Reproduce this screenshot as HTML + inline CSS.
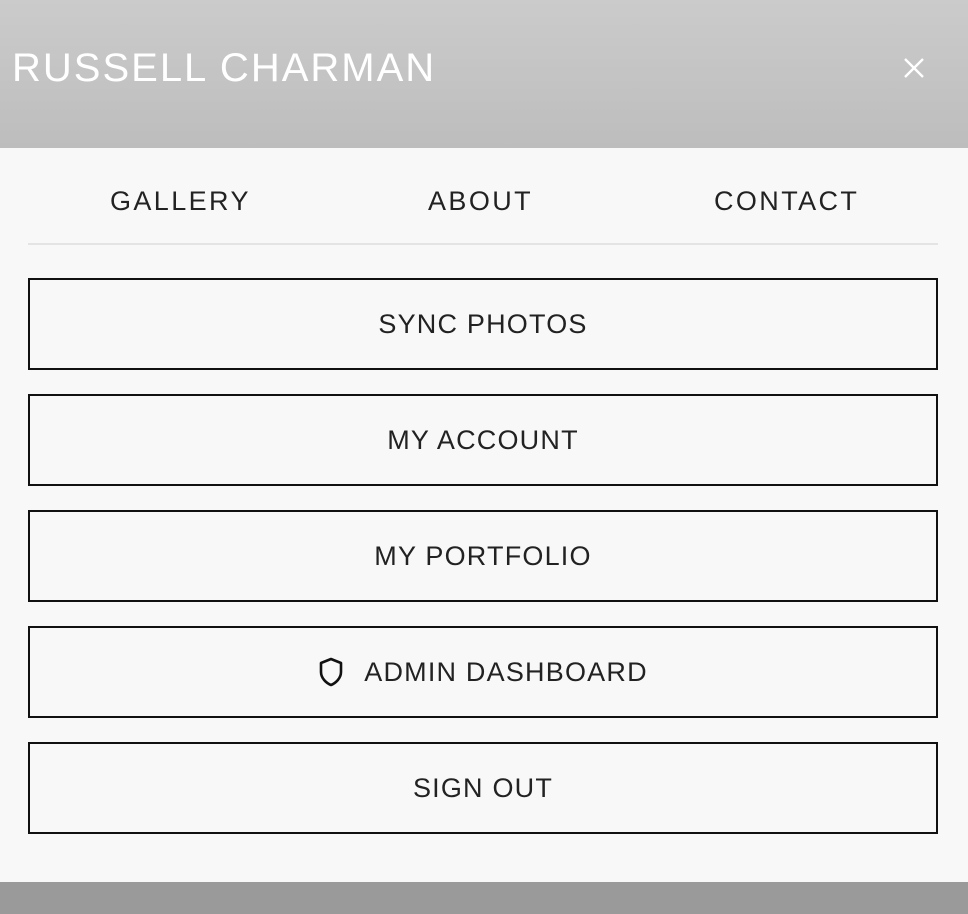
<!DOCTYPE html>
<html><head><style>
*{margin:0;padding:0;box-sizing:border-box}
body{width:968px;height:914px;overflow:hidden;font-family:"Liberation Sans",sans-serif;background:#9a9a9a}
.hdr{height:148px;background:linear-gradient(#cbcbcb,#bdbdbd);position:relative}
.title{position:absolute;left:12px;top:44px;font-size:40px;color:#fff;letter-spacing:2px;font-weight:300;line-height:48px}
.x{position:absolute;left:903px;top:57px}
.panel{position:absolute;top:148px;left:0;width:968px;height:734px;background:#f8f8f8}
.nav{position:absolute;top:0;left:28px;width:910px;height:97px;border-bottom:2px solid #e4e4e4}
.nav span{position:absolute;top:36px;font-size:27px;letter-spacing:2.4px;color:#222;line-height:34px}
.btn{position:absolute;left:28px;width:910px;height:92px;border:2px solid #111;display:flex;align-items:center;justify-content:center;font-size:27px;letter-spacing:1.2px;color:#222}
.btn svg{margin-right:20px}
</style></head><body>
<div class="hdr"><div class="title">RUSSELL CHARMAN</div>
<svg class="x" width="22" height="22" viewBox="0 0 22 22"><path d="M2 2L20 20M20 2L2 20" stroke="#fff" stroke-width="2.4"/></svg></div>
<div class="panel">
<div class="nav"><span style="left:82px">GALLERY</span><span style="left:400px">ABOUT</span><span style="left:686px">CONTACT</span></div>
<div class="btn" style="top:130px">SYNC PHOTOS</div>
<div class="btn" style="top:246px">MY ACCOUNT</div>
<div class="btn" style="top:362px">MY PORTFOLIO</div>
<div class="btn" style="top:478px"><svg width="26" height="30" viewBox="0 0 26 30"><path d="M13 2L23 6V15C23 21 18 26 13 28C8 26 3 21 3 15V6Z" fill="none" stroke="#111" stroke-width="2.6" stroke-linejoin="round"/></svg>ADMIN DASHBOARD</div>
<div class="btn" style="top:594px">SIGN OUT</div>
</div>
</body></html>
